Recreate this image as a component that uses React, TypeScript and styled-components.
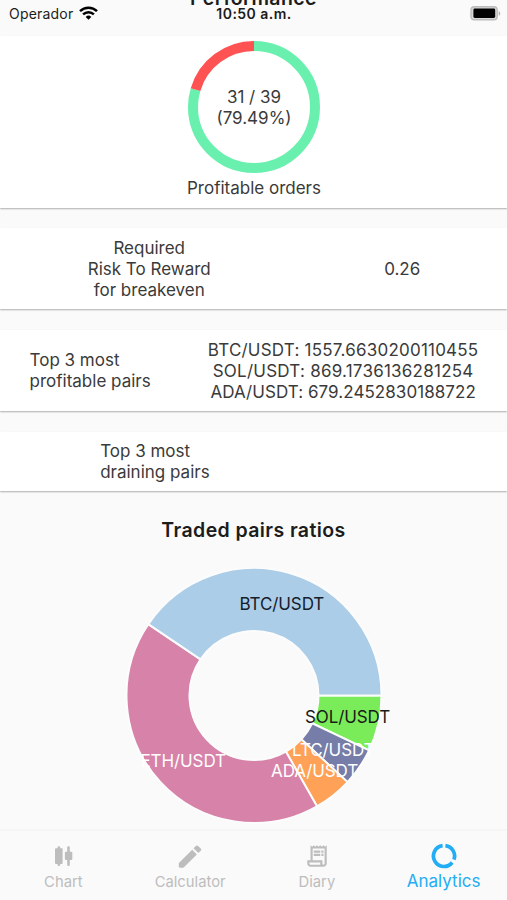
import React from "react";
import styled, { createGlobalStyle } from "styled-components";
import { MdOutlineReceiptLong } from "react-icons/md";

const GlobalStyle = createGlobalStyle`
  body { margin: 0; background: #fafafa; }
  * { box-sizing: border-box; }
`;

const Screen = styled.div`
  width: 507px;
  height: 900px;
  overflow: hidden;
  display: flex;
  flex-direction: column;
  background: #fafafa;
  color: #3a3a3a;
  font-family: Inter, "Liberation Sans", sans-serif;
  font-size: 17px;
  line-height: 21px;
  letter-spacing: 0;
`;

const StatusBar = styled.header`
  position: relative;
  flex: none;
  height: 36px;
  padding: 4px 6px 0 9px;
  overflow: hidden;
  display: grid;
  grid-template-columns: 1fr auto 1fr;
  align-items: start;
  color: #1c1c1c;
  font-size: 14px;
  line-height: 20px;
`;

const Carrier = styled.div`
  display: flex;
  align-items: center;
  gap: 6px;
  letter-spacing: 0.2px;
  svg { margin-top: -2px; }
`;

const Clock = styled.div`
  font-weight: 600;
  letter-spacing: 0.45px;
  margin-right: 2px;
`;

const BatterySlot = styled.div`
  display: flex;
  justify-content: flex-end;
  padding-top: 2px;
`;

const ScrolledTitle = styled.h2`
  position: absolute;
  top: -14px;
  left: 0;
  width: 100%;
  margin: 0;
  text-align: center;
  font-size: 19.5px;
  line-height: 24px;
  font-weight: 600;
  letter-spacing: 0.4px;
`;

const Content = styled.main`
  flex: 1;
  min-height: 0;
  display: flex;
  flex-direction: column;
`;

const Card = styled.section<{ $height: number; $gap: number }>`
  flex: none;
  height: ${(p) => p.$height}px;
  margin-bottom: ${(p) => p.$gap}px;
  padding: 1px 0 0 1px;
  display: flex;
  align-items: center;
  justify-content: space-around;
  background: #fff;
  box-shadow: 0 1px 1.5px rgba(0, 0, 0, 0.3);
`;

const RingCard = styled(Card)`
  flex-direction: column;
  justify-content: flex-start;
  padding: 5px 0 0 1px;
`;

const Ring = styled.div`
  display: grid;
  place-items: center;
  width: 132px;
  height: 132px;
  > * { grid-area: 1 / 1; }
`;

const Lines = styled.div<{ $align?: string }>`
  text-align: ${(p) => p.$align ?? "center"};
  white-space: pre;
`;

const RingValue = styled(Lines)`
  padding-top: 2px;
`;

const PairValue = styled.div<{ $spacing: number }>`
  letter-spacing: ${(p) => p.$spacing}px;
`;

const RingCaption = styled.div`
  margin-top: 5px;
`;

const ChartTitle = styled.h2`
  margin: 27px 0 26px;
  text-align: center;
  color: #1c1c1c;
  font-size: 19.5px;
  line-height: 24px;
  font-weight: 600;
  letter-spacing: 0.4px;
`;

const Donut = styled.svg`
  display: block;
  align-self: center;
  flex: none;
  font-size: 17px;
  letter-spacing: -0.1px;
`;

const NavBar = styled.nav`
  flex: none;
  height: 69px;
  display: flex;
  background: #fafafa;
  box-shadow: 0 -1px 3px rgba(0, 0, 0, 0.035);
`;

const NavItem = styled.a<{ $active?: boolean }>`
  flex: 1;
  display: flex;
  flex-direction: column;
  align-items: center;
  padding-top: 12px;
  color: ${(p) => (p.$active ? "#22adf4" : "#bdbdbd")};
  svg { flex: none; }
`;

const NavLabel = styled.span<{ $active?: boolean }>`
  margin-top: ${(p) => (p.$active ? 2 : 3)}px;
  font-size: ${(p) => (p.$active ? 17 : 14.8)}px;
  line-height: 20px;
`;

const CX = 128;
const CY = 128;
const OUTER = 127.5;
const INNER = 64.5;

function point(radius: number, degrees: number) {
  const a = (degrees * Math.PI) / 180;
  return `${(CX + radius * Math.cos(a)).toFixed(2)} ${(CY + radius * Math.sin(a)).toFixed(2)}`;
}

function sector(from: number, to: number) {
  const large = to - from > 180 ? 1 : 0;
  return `M${point(OUTER, from)} A${OUTER} ${OUTER} 0 ${large} 1 ${point(OUTER, to)} L${point(INNER, to)} A${INNER} ${INNER} 0 ${large} 0 ${point(INNER, from)} Z`;
}

const slices = [
  { label: "SOL/USDT", from: 0, to: 25.5, color: "#7bec59", ink: "#1a1a1a", x: 179, y: 155 },
  { label: "LTC/USDT", from: 25.5, to: 42.8, color: "#767da8", ink: "#fff", x: 166, y: 188 },
  { label: "ADA/USDT", from: 42.8, to: 60.4, color: "#ffa157", ink: "#fff", x: 145, y: 209 },
  { label: "ETH/USDT", from: 60.4, to: 214, color: "#d682a9", ink: "#fff", x: 14.5, y: 199 },
  { label: "BTC/USDT", from: 214, to: 360, color: "#abcde7", ink: "#14202b", x: 113.5, y: 42 },
];

const profitablePairs = [
  { text: "BTC/USDT: 1557.6630200110455", spacing: 0.22 },
  { text: "SOL/USDT: 869.1736136281254", spacing: 0.24 },
  { text: "ADA/USDT: 679.2452830188722", spacing: 0.06 },
];

function WifiIcon() {
  return (
    <svg width="19" height="14" viewBox="0 0 19 14" fill="none" stroke="#000" strokeWidth="2.5">
      <path d="M1 5.1a12.2 12.2 0 0 1 17 0" />
      <path d="M4.1 8.4a7.8 7.8 0 0 1 10.8 0" />
      <path d="M9.5 13.7 6.7 10.9a4 4 0 0 1 5.6 0Z" fill="#000" stroke="none" />
    </svg>
  );
}

function BatteryIcon() {
  return (
    <svg width="31" height="15" viewBox="0 0 31 15">
      <rect x="1" y="0.8" width="26.2" height="13" rx="3.4" fill="#d8d8d8" stroke="#bcbcbc" strokeWidth="1.4" />
      <rect x="3.4" y="2.6" width="21.8" height="9.3" rx="1.4" fill="#000" />
      <path d="M28.7 5v4.8c2-.8 2-4 0-4.8Z" fill="#b3b3b3" />
    </svg>
  );
}

function CandlesIcon() {
  return (
    <svg width="26" height="26" viewBox="0 0 26 26" fill="currentColor">
      <rect x="7.6" y="3.3" width="2.6" height="19.6" rx="1.2" />
      <rect x="5" y="5.3" width="7.6" height="15.6" rx="1" />
      <rect x="17.2" y="3.3" width="2.6" height="19.6" rx="1.2" />
      <rect x="14.9" y="8.7" width="7.4" height="8.4" rx="1" />
    </svg>
  );
}

function PencilIcon() {
  return (
    <svg width="28" height="26" viewBox="0 0 24 22.3" fill="currentColor">
      <path d="M2.4 17.6v2.6c0 .6.4 1 1 1h2.7c.3 0 .5-.1.7-.3L17.9 9.8 13.9 5.8 2.7 16.9c-.2.2-.3.4-.3.7zM21.2 6.7c.6-.6.6-1.4 0-2L19 2.5c-.6-.6-1.4-.6-2 0l-2 2 4.1 4.1z" />
    </svg>
  );
}

function UsageIcon() {
  return (
    <svg width="26" height="26" viewBox="0 0 26 26" fill="none" stroke="currentColor" strokeWidth="3.7">
      <path d="M14.4 2.6A10.5 10.5 0 0 1 22.9 16.7" />
      <path d="M21.2 19.5A10.5 10.5 0 1 1 11.6 2.6" />
    </svg>
  );
}

export default function App() {
  const ringLength = 2 * Math.PI * 61;
  const lossLength = ringLength * (1 - 0.7949);
  const winLength = ringLength * 0.7949;
  return (
    <>
      <GlobalStyle />
      <Screen>
        <StatusBar>
          <ScrolledTitle>Performance</ScrolledTitle>
          <Carrier>Operador<WifiIcon /></Carrier>
          <Clock>10:50 a.m.</Clock>
          <BatterySlot><BatteryIcon /></BatterySlot>
        </StatusBar>
        <Content>
          <RingCard $height={172} $gap={20}>
            <Ring>
              <svg width="132" height="132" viewBox="0 0 132 132" fill="none" strokeWidth="10">
                <circle
                  cx="66" cy="66" r="61" stroke="#69f0ae"
                  strokeDasharray={`${winLength} ${ringLength}`}
                  transform="rotate(-90 66 66)"
                />
                <circle
                  cx="66" cy="66" r="61" stroke="#ff5252"
                  strokeDasharray={`0 ${winLength} ${lossLength} 0`}
                  transform="rotate(-90 66 66)"
                />
              </svg>
              <RingValue>{"31 / 39\n(79.49%)"}</RingValue>
            </Ring>
            <RingCaption>Profitable orders</RingCaption>
          </RingCard>
          <Card $height={81} $gap={21}>
            <Lines>{"Required\nRisk To Reward\nfor breakeven"}</Lines>
            <Lines>0.26</Lines>
          </Card>
          <Card $height={81} $gap={21}>
            <Lines $align="left">{"Top 3 most\nprofitable pairs"}</Lines>
            <Lines>
              {profitablePairs.map((p) => (
                <PairValue key={p.text} $spacing={p.spacing}>{p.text}</PairValue>
              ))}
            </Lines>
          </Card>
          <Card $height={59} $gap={0}>
            <Lines $align="left">{"Top 3 most\ndraining pairs"}</Lines>
            <Lines />
          </Card>
          <ChartTitle>Traded pairs ratios</ChartTitle>
          <Donut width="274" height="256" viewBox="-9 0.5 274 256">
            {slices.map((s) => (
              <path key={s.label} d={sector(s.from, s.to)} fill={s.color} stroke="#fcfcfc" strokeWidth="2" />
            ))}
            {slices.map((s) => (
              <text key={s.label} x={s.x} y={s.y} fill={s.ink}>{s.label}</text>
            ))}
          </Donut>
        </Content>
        <NavBar>
          <NavItem><CandlesIcon /><NavLabel>Chart</NavLabel></NavItem>
          <NavItem><PencilIcon /><NavLabel>Calculator</NavLabel></NavItem>
          <NavItem><MdOutlineReceiptLong size={26} /><NavLabel>Diary</NavLabel></NavItem>
          <NavItem $active><UsageIcon /><NavLabel $active>Analytics</NavLabel></NavItem>
        </NavBar>
      </Screen>
    </>
  );
}
